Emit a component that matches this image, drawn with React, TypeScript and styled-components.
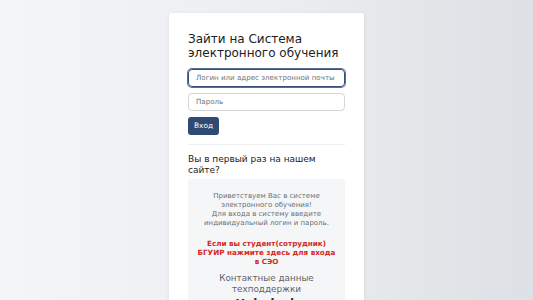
import React from "react";
import styled, { createGlobalStyle } from "styled-components";

const Global = createGlobalStyle`
  html, body { margin: 0; padding: 0; height: 100%; }
  body {
    font-family: "DejaVu Sans", "Liberation Sans", sans-serif;
    background: linear-gradient(90deg, #f4f5f7 0%, #eceef1 50%, #dde0e4 100%);
    overflow: hidden;
  }
  #root { height: 100%; }
`;

const Page = styled.div`
  display: flex;
  justify-content: center;
  padding-top: 13px;
  height: 100%;
  box-sizing: border-box;
`;

const Card = styled.div`
  width: 195px;
  box-sizing: border-box;
  background: #fff;
  border-radius: 3px;
  box-shadow: 0 1px 4px rgba(0, 0, 0, 0.08);
  padding: 19px 19px 0 19px;
  display: flex;
  flex-direction: column;
  height: 400px;
`;

const Title = styled.h2`
  margin: 0 0 8px;
  font-weight: 400;
  font-size: 12px;
  line-height: 14.4px;
  color: #1d2125;
`;

const Input = styled.div<{ $focus?: boolean }>`
  box-sizing: border-box;
  height: 18px;
  border: 1px solid ${(p) => (p.$focus ? "#34507a" : "#d3d7dc")};
  box-shadow: ${(p) => (p.$focus ? "0 0 0 1px #5b6f92" : "none")};
  border-radius: 4px;
  padding: 0 7px;
  display: flex;
  align-items: center;
  font-size: 7.1px;
  color: #6a737b;
  margin-bottom: 6px;
  white-space: nowrap;
  overflow: hidden;
`;

const Button = styled.div`
  align-self: flex-start;
  background: #2f4a72;
  color: #fff;
  font-size: 7.4px;
  border-radius: 3px;
  height: 18px;
  padding: 0 6px;
  display: flex;
  align-items: center;
`;

const Divider = styled.hr`
  border: 0;
  border-top: 1px solid #eceef0;
  margin: 9px 0 9px;
  width: 100%;
`;

const Subtitle = styled.h3`
  margin: 0 0 3px;
  font-weight: 400;
  font-size: 9px;
  line-height: 11.3px;
  color: #1d2125;
`;

const InfoBox = styled.div`
  background: #f5f6f8;
  border-radius: 3px;
  padding: 13px 6px;
  text-align: center;
  display: flex;
  flex-direction: column;
  align-items: center;
`;

const Welcome = styled.p`
  margin: 0 0 13px;
  font-size: 7px;
  line-height: 8.7px;
  color: #6a6f74;
`;

const RedLink = styled.p`
  margin: 0 0 7px;
  font-size: 7.2px;
  line-height: 8.7px;
  font-weight: 700;
  color: #d6281e;
`;

const Contacts = styled.p`
  margin: 0 0 3px;
  font-size: 8.8px;
  line-height: 10.5px;
  color: #5f6368;
`;

const Helpdesk = styled.p`
  margin: 0;
  font-size: 12px;
  line-height: 14px;
  font-weight: 700;
  color: #333;
`;

export default function App() {
  return (
    <>
      <Global />
      <Page>
        <Card>
          <Title>
            Зайти на Система
            <br />
            электронного обучения
          </Title>
          <Input $focus>Логин или адрес электронной почты</Input>
          <Input>Пароль</Input>
          <Button>Вход</Button>
          <Divider />
          <Subtitle>
            Вы в первый раз на нашем
            <br />
            сайте?
          </Subtitle>
          <InfoBox>
            <Welcome>
              Приветствуем Вас в системе
              <br />
              электронного обучения!
              <br />
              Для входа в систему введите
              <br />
              индивидуальный логин и пароль.
            </Welcome>
            <RedLink>
              Если вы студент(сотрудник)
              <br />
              БГУИР нажмите здесь для входа
              <br />в СЭО
            </RedLink>
            <Contacts>
              Контактные данные
              <br />
              техподдержки
            </Contacts>
            <Helpdesk>Helpdesk</Helpdesk>
          </InfoBox>
        </Card>
      </Page>
    </>
  );
}
